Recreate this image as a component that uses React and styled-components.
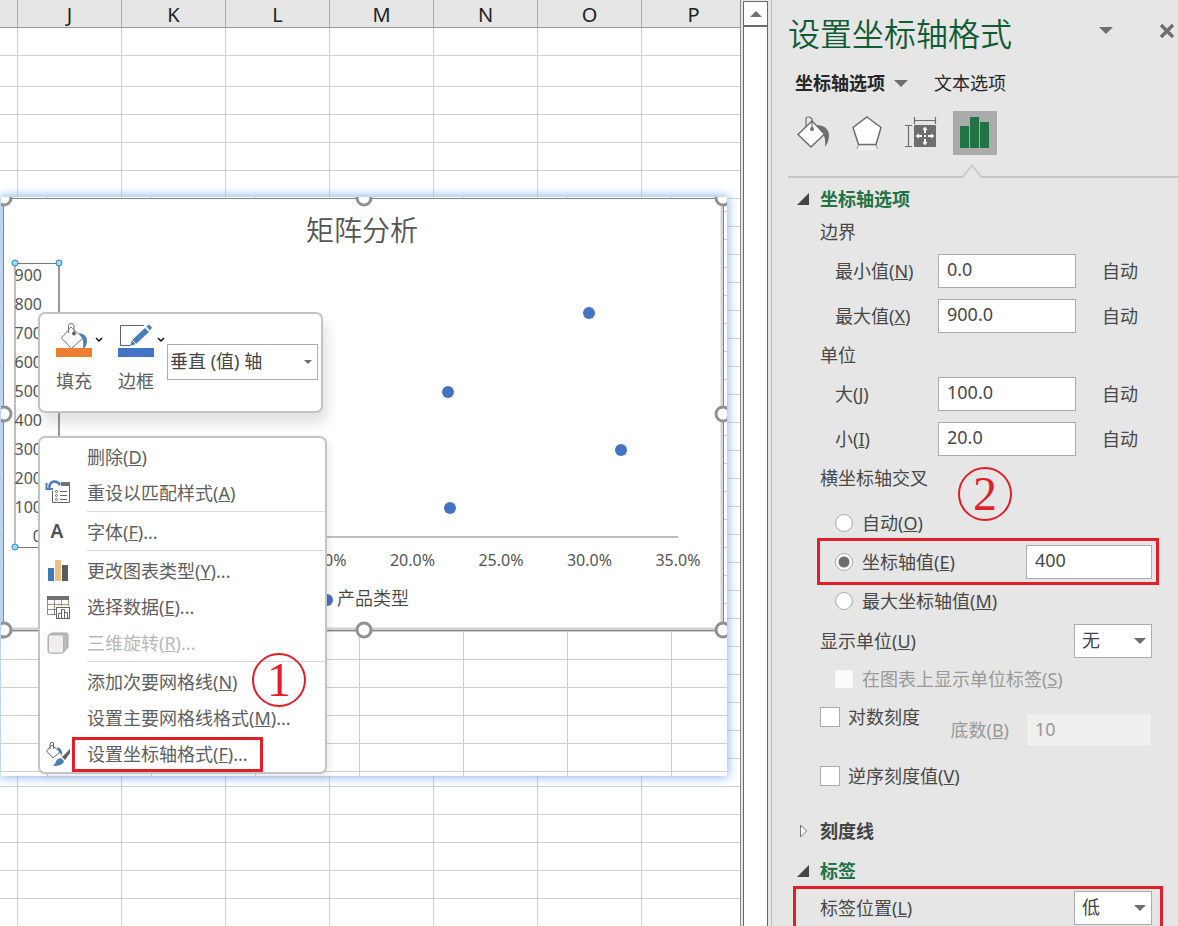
import styled, { createGlobalStyle, css } from 'styled-components';

const GlobalStyle = createGlobalStyle`
  * {
    box-sizing: border-box;
  }

  body {
    margin: 0;
    font-family: 'Noto Sans', 'Noto Sans CJK SC', sans-serif;
    font-size: 18px;
    line-height: 24px;
    color: #484848;
    background: #e6e6e6;
  }

  button, input, select {
    margin: 0;
    font: inherit;
    color: inherit;
  }

  button {
    padding: 0;
    border: 0;
    background: none;
    text-align: left;
  }
`;

const Page = styled.div`
  display: flex;
  height: 100vh;
  overflow: hidden;
`;

/* ---------- worksheet ---------- */

const Sheet = styled.main`
  position: relative;
  flex: 1;
  min-width: 0;
  overflow: hidden;
  background: #fff;
  border-right: 1px solid #8c8c8c;
`;

const Cells = styled.table`
  width: 746px;
  table-layout: fixed;
  border-collapse: separate;
  border-spacing: 0;

  th {
    height: 28px;
    padding: 3px 0 0;
    font-size: 20px;
    font-weight: 400;
    color: #222;
    background: #e6e6e6;
    border-right: 1px solid #ababab;
    border-bottom: 1px solid #999;
  }

  th:first-child {
    width: 18px;
  }

  td {
    height: 28px;
    padding: 0;
    border-right: 1px solid #d0d0d0;
    border-bottom: 1px solid #d0d0d0;
  }

  tr:nth-child(2) td {
    height: 31px;
  }
`;

const ScrollBar = styled.div`
  flex: 0 0 25px;
  margin: 1px 3px 0 2px;
  border: 1px solid #6a6a6a;
  border-bottom: 0;
  background: #fff;
`;

const ScrollButton = styled.button`
  display: flex;
  align-items: center;
  justify-content: center;
  width: 100%;
  height: 25px;
  border-bottom: 2px solid #6a6a6a;
`;

/* ---------- pasted picture with the chart ---------- */

const Picture = styled.figure`
  position: absolute;
  top: 197px;
  left: 1px;
  width: 726px;
  height: 579px;
  margin: 0;
  overflow: hidden;
  box-shadow: 0 0 10px 1px #86b4f0;
  background-color: #fff;
  background-image:
    linear-gradient(90deg, #cdcdcd 1px, transparent 1px),
    linear-gradient(#cdcdcd 1px, transparent 1px);
  background-size: 104px 28px;
  background-position: 46px 14px;

  svg {
    display: block;
  }
`;

const Mark = styled.span`
  position: absolute;
  top: ${(p) => p.$top};
  left: ${(p) => p.$left};
  display: flex;
  align-items: center;
  justify-content: center;
  width: 54px;
  height: 54px;
  border: 2px solid #e01f2b;
  border-radius: 50%;
  font-family: 'Liberation Serif', serif;
  font-size: 48px;
  line-height: 50px;
  color: #e01f2b;
`;

/* ---------- floating menus ---------- */

const floating = css`
  position: absolute;
  left: 38px;
  background: #fff;
  border: 2px solid #c3c3c3;
  border-radius: 7px;
  color: #606060;
`;

const MiniBar = styled.div`
  ${floating}
  top: 312px;
  display: flex;
  width: 285px;
  height: 101px;
  padding: 8px 3px 8px 16px;
  box-shadow: 4px 10px 14px rgba(0, 0, 0, 0.12);
`;

const MiniButton = styled.button`
  display: flex;
  flex: 0 0 62px;
  flex-direction: column;
  justify-content: space-between;
  height: 71px;

  svg {
    display: block;
  }
`;

const Drop = styled.span`
  position: relative;
  display: block;
  width: ${(p) => p.$width};

  svg {
    position: absolute;
    top: 50%;
    right: 6px;
    transform: translateY(-50%);
    pointer-events: none;
  }
`;

const Select = styled.select`
  display: block;
  width: 100%;
  height: ${(p) => (p.$tall ? 36 : 34)}px;
  padding: 0 ${(p) => (p.$tall ? 2 : 7)}px 2px;
  border: 1px solid #ababab;
  border-radius: 0;
  background: #fff;
  color: #444;
  appearance: none;
`;

const DropSlot = styled.div`
  margin: 22px 0 0 -13px;
`;

const Menu = styled.ul`
  ${floating}
  top: 436px;
  width: 289px;
  margin: 0;
  padding: 1px 0 0;
  list-style: none;
  box-shadow: 3px 4px 6px rgba(0, 0, 0, 0.08);
`;

const MenuButton = styled.button`
  display: grid;
  grid-template-columns: 40px 1fr;
  align-items: center;
  width: 100%;
  height: 36px;
  padding-left: 7px;
  white-space: nowrap;

  &:disabled {
    color: #b8b8b8;
  }
`;

const MenuIcon = styled.span`
  display: block;
  width: 26px;
  height: 26px;
  margin-left: -2px;
`;

const MenuLabel = styled.span`
  justify-self: start;
  ${(p) =>
    p.$boxed &&
    css`
      margin-left: -12px;
      padding: 2px 12px 3px;
      outline: 3px solid #e01f2b;
    `}
`;

const MenuRule = styled.li`
  height: 3px;
  margin-left: 47px;
  border-top: 1px solid #dadada;
`;

/* ---------- format pane ---------- */

const Pane = styled.aside`
  position: relative;
  flex: 0 0 407px;
  padding-left: 16px;
  overflow: hidden;
  background: #e6e6e6;
  border-left: 1px solid #bdbdbd;
`;

const PaneHead = styled.header`
  display: flex;
  align-items: center;
  height: 64px;
  padding: 4px 3px 0 0;

  h1 {
    flex: 1;
    margin: 0;
    font-size: 32px;
    line-height: 44px;
    font-weight: 350;
    color: #0f5c34;
  }
`;

const HeadButton = styled.button`
  display: flex;
  margin: 0 0 7px 46px;
`;

const Tabs = styled.nav`
  display: flex;
  align-items: center;
  gap: 26px;
  height: 38px;
  padding-left: 7px;
`;

const Tab = styled.button`
  display: flex;
  align-items: center;
  gap: 9px;
  color: #262626;
  font-weight: ${(p) => (p.$active ? 700 : 400)};
`;

const IconTabs = styled.div`
  display: flex;
  align-items: center;
  gap: 10px;
  height: 62px;
  padding-left: 3px;
`;

const IconTab = styled.button`
  display: flex;
  align-items: center;
  justify-content: center;
  width: 44px;
  height: 44px;
  background: ${(p) => (p.$active ? '#ababab' : 'none')};
`;

const Divider = styled.div`
  position: relative;
  height: 14px;
  border-bottom: 2px solid #c6c6c6;

  svg {
    position: absolute;
    top: 0;
    left: 174px;
  }
`;

const Section = styled.section`
  & + & {
    margin-top: 3px;
  }
`;

const SectionHead = styled.button`
  display: grid;
  grid-template-columns: 32px 1fr;
  align-items: center;
  width: 100%;
  height: 37px;
  padding: 5px 0 0;
  font-weight: 700;
  color: ${(p) => (p.$open ? '#217346' : '#444')};

  svg {
    margin-left: 9px;
  }
`;

const Body = styled.div`
  padding: 0 26px 8px 32px;
`;

const GroupLabel = styled.div`
  display: flex;
  align-items: center;
  height: 33px;
`;

const Field = styled.div`
  display: grid;
  grid-template-columns: 103px 138px 1fr;
  align-items: center;
  height: 45px;
  padding-left: 15px;

  button {
    justify-self: start;
    margin-left: 26px;
  }
`;

const TextBox = styled.input`
  width: ${(p) => p.$width || '100%'};
  height: 34px;
  padding: 0 8px 3px;
  border: 1px solid #ababab;
  border-radius: 0;
  background: #fff;

  &:disabled {
    color: #999;
    background: #efefed;
    border-color: #e2e2e0;
  }
`;

const RadioGroup = styled.div`
  position: relative;
  padding-top: 10px;
`;

const Row = styled.div`
  display: flex;
  align-items: center;
  justify-content: space-between;
  height: ${(p) => p.$height}px;
  padding-left: ${(p) => (p.$indent ? 15 : 0)}px;
`;

const RedBox = styled.div`
  margin: ${(p) => (p.$wide ? '2px -8px 0 -24px' : '0 -4px 0 0')};
  padding: ${(p) => (p.$wide ? '0 8px 0 24px' : '0 4px 0 0')};
  min-height: ${(p) => (p.$wide ? 90 : 41)}px;
  outline: 3px solid #e01f2b;
`;

const Choice = styled.label`
  display: flex;
  align-items: center;
  gap: 9px;
  color: ${(p) => (p.$disabled ? '#999' : 'inherit')};
`;

const Radio = styled.input`
  width: 18px;
  height: 18px;
  margin: 0;
  appearance: none;
  border: 1px solid #ababab;
  border-radius: 50%;
  background: #fff;

  &:checked {
    background: radial-gradient(circle, #6e6e6e 5px, #fff 6px);
  }
`;

const Check = styled.input`
  width: 20px;
  height: 20px;
  margin: 0 -1px 0 0;
  appearance: none;
  border: 1px solid #ababab;
  background: #fff;

  &:disabled {
    width: 18px;
    height: 18px;
    margin: 0;
    border-color: #f7f7f7;
    background: #fbfbfb;
  }
`;

const LogRow = styled.div`
  display: flex;
  align-items: flex-start;
  justify-content: space-between;
  height: 58px;

  > label {
    height: 44px;
  }
`;

const BaseField = styled.div`
  display: flex;
  align-items: center;
  gap: 17px;
  margin-top: 18px;
  color: #999;
`;

/* ---------- drawings ---------- */

const Caret = ({ size = 14, color = '#6e6e6e' }) => (
  <svg width={size} height={size / 2} viewBox="0 0 14 7">
    <path d="M0 0H14L7 7Z" fill={color} />
  </svg>
);

const Chevron = () => (
  <path d="M40 16l3 3 3-3" fill="none" stroke="#111" strokeWidth="1.500" />
);

const FillIcon = () => (
  <svg width="50" height="36" viewBox="0 0 50 36">
    <path d="M15 5L27 16L15.500 26.500L5.500 16Z" fill="#fff" stroke="#777" />
    <path d="M12.500 11V3.500Q12.500 1.500 15 1.500T18 3.500V11" fill="none" stroke="#777" />
    <circle cx="18" cy="11.500" r="2" fill="#666" />
    <path d="M23 11Q31 12 31 19Q31 24 27 27Q28 19 26 16Z" fill="#4a7ebb" />
    <rect y="26" width="36" height="9" fill="#ed7d31" />
    <Chevron />
  </svg>
);

const BorderIcon = () => (
  <svg width="50" height="36" viewBox="0 0 50 36">
    <path d="M26 3.500H2.500V23.500H12" fill="none" stroke="#666" />
    <path d="M12 24L14 18L27 6L31 10L18 22Z" fill="#4a7ebb" />
    <path d="M28.500 4.500L31 2.500L34 5.500L32 8.500Z" fill="#4a7ebb" />
    <path d="M14 18L18 22" stroke="#fff" />
    <rect y="26" width="36" height="9" fill="#4472c4" />
    <Chevron />
  </svg>
);

const ResetIcon = () => (
  <svg viewBox="0 0 26 26">
    <path d="M7.500 11V22.500H24.500V5" fill="#fff" stroke="#666" />
    <rect x="16" y="2" width="9" height="4" fill="#707070" />
    <path d="M15 11.500H22M15 15.500H22M15 19.500H22" stroke="#666" />
    <g fill="none" stroke="#666">
      <circle cx="11.500" cy="11.500" r="1" />
      <circle cx="11.500" cy="15.500" r="1" />
      <circle cx="11.500" cy="19.500" r="1" />
    </g>
    <path d="M15 5Q12 0 7 2Q4 4 4.500 8" fill="none" stroke="#4a7ebb" strokeWidth="2.500" />
    <path d="M1.500 3V9H8" fill="none" stroke="#4a7ebb" strokeWidth="2" />
  </svg>
);

const FontIcon = () => (
  <svg viewBox="0 0 26 26">
    <text x="12" y="19" textAnchor="middle" fontSize="19" fontWeight="600" fill="#505050">A</text>
  </svg>
);

const ChartTypeIcon = () => (
  <svg viewBox="0 0 26 26">
    <rect x="3" y="10" width="6" height="13" fill="#3f79b8" />
    <rect x="10" y="2" width="6" height="21" fill="#ecbf80" />
    <rect x="17" y="7" width="6" height="16" fill="#595959" />
  </svg>
);

const SelectDataIcon = () => (
  <svg viewBox="0 0 26 26">
    <rect x="2" y="2" width="22" height="4" fill="#707070" />
    <path d="M2.500 6V20.500H11M2 15.500H12M9.500 6V20" fill="none" stroke="#8a8a8a" />
    <path d="M2 10.500H24M16.500 6V12M23.500 6V12" fill="none" stroke="#b09078" />
    <rect x="11.500" y="13.500" width="13" height="11" fill="#fff" stroke="#666" />
    <path d="M13.500 24V19.500H16.500V24M16.500 20V15.500H19.500V24M19.500 18.500H22.500V24" fill="none" stroke="#666" />
  </svg>
);

const CubeIcon = () => (
  <svg viewBox="0 0 26 26">
    <path d="M3 7Q3 5 5 4L7 3H21Q23 3 23 5V17L19 22Q18 23 16 23H5Q3 23 3 21Z" fill="#bdbabd" stroke="#a8a4a8" />
    <rect x="3.500" y="5" width="15" height="18" rx="2" fill="#f1eef2" stroke="#b5b1b5" />
  </svg>
);

const FormatIcon = () => (
  <svg viewBox="0 0 26 26">
    <path d="M7 4L15 11L8 17L1.500 10Z" fill="#fff" stroke="#666" />
    <path d="M5 8V3Q5 1.500 7 1.500T8.500 3V8" fill="none" stroke="#666" />
    <path d="M12 6Q18 7 17 15Q15 12 14 11Z" fill="#4a7ebb" />
    <path d="M25 8V12L20 19L17 16Z" fill="#606060" />
    <path d="M16 17L19 20Q18 25 8 25Q11 22 11 20Q13 17 16 17Z" fill="#4a7ebb" />
  </svg>
);

const BucketIcon = () => (
  <svg width="34" height="34" viewBox="0 0 34 34">
    <path d="M20 9Q32 9 33 19Q33 26 29 31Q30 22 27 18Z" fill="#6e6e6e" />
    <path d="M16 5L28.500 18L15 31L2 18.500Z" fill="#fff" stroke="#6e6e6e" strokeWidth="1.500" />
    <path d="M10 11V3Q10 1 12.500 1T16 3V13" fill="none" stroke="#6e6e6e" strokeWidth="1.200" />
    <circle cx="16" cy="13" r="2" fill="#6e6e6e" />
  </svg>
);

const PentagonIcon = () => (
  <svg width="34" height="36" viewBox="0 0 34 36">
    <path d="M17 2L31 12.500L26 29.500H8.500L3 12.500Z" fill="#fff" stroke="#6e6e6e" strokeWidth="1.500" />
    <path d="M9 31H25.500L27 35H7Z" fill="#f1f1f1" />
    <path d="M8.500 30L7 34M26 30L27.500 34" stroke="#999" />
  </svg>
);

const SizeIcon = () => (
  <svg width="34" height="34" viewBox="0 0 34 34">
    <path d="M10.500 1V8M31.500 1V8M10.500 4.500H31.500M1 9.500H8M1 30.500H8M4.500 9.500V30.500" stroke="#6e6e6e" strokeWidth="1.200" />
    <rect x="10" y="9" width="22" height="22" rx="1" fill="#6e6e6e" />
    <path d="M21 13V17M21 23V27M14 20H18M24 20H28" stroke="#fff" strokeWidth="2" />
    <path d="M21 10.500L18.500 14H23.500ZM21 29.500L18.500 26H23.500ZM11.500 20L15 17.500V22.500ZM30.500 20L27 17.500V22.500Z" fill="#fff" />
    <rect x="20" y="19" width="2" height="2" fill="#fff" />
  </svg>
);

const BarsIcon = () => (
  <svg width="30" height="32" viewBox="0 0 30 32">
    <path d="M0 9H9V31H0ZM10 0H19V31H10ZM20 5H29V31H20Z" fill="#217346" />
  </svg>
);

const points = [
  [588, 116],
  [447, 195],
  [620, 253],
  [449, 311],
];

const handles = [
  [3, 1], [363, 1], [722, 1],
  [3, 217], [722, 217],
  [3, 433], [363, 433], [722, 433],
];

const Chart = () => (
  <svg width="726" height="442" viewBox="0 0 726 442">
    <rect width="3" height="442" fill="#c3d3ea" />
    <rect x="3" y="1" width="719" height="433" fill="#fff" />
    <path d="M721 1V434M3 432H722" stroke="#d3d3d3" strokeWidth="3" />
    <path d="M2.500 433V1.500H722.500V433.500H3" fill="none" stroke="#868686" />
    <text x="361" y="44" textAnchor="middle" fontSize="28" fontWeight="350" fill="#555">矩阵分析</text>
    <path d="M14 67V350" stroke="#c4bcbc" strokeWidth="2" />
    <path d="M58 67V350" stroke="#999" strokeWidth="2" />
    <path d="M14 66.500H58M14 350.500H58" stroke="#777" />
    <path d="M58 340H677" stroke="#bfbfbf" strokeWidth="2" />
    <g fontSize="16" fill="#555">
      {[900, 800, 700, 600, 500, 400, 300, 200, 100, 0].map((n, i) => (
        <text key={n} x="41" y={84 + i * 29} textAnchor="end">{n}</text>
      ))}
      {[15, 20, 25, 30, 35].map((n, i) => (
        <text key={n} x={323 + i * 88.5} y="369" textAnchor="middle">{n}.0%</text>
      ))}
    </g>
    <g fill="#4472c4">
      {points.map(([x, y]) => (
        <circle key={y} cx={x} cy={y} r="6" />
      ))}
      <circle cx="326" cy="403" r="6" />
    </g>
    <text x="336" y="408" fontSize="18" fontWeight="350" fill="#444">产品类型</text>
    <g fill="#9bdcfb" stroke="#2e83c9">
      <circle cx="14" cy="66" r="3" />
      <circle cx="58" cy="66" r="3" />
      <circle cx="14" cy="350" r="3" />
    </g>
    <g fill="#fff" stroke="#919191" strokeWidth="3">
      {handles.map(([x, y]) => (
        <circle key={`${x}-${y}`} cx={x} cy={y} r="7" />
      ))}
    </g>
  </svg>
);

/* ---------- page ---------- */

const columns = ['J', 'K', 'L', 'M', 'N', 'O', 'P'];
const rows = Array.from({ length: 60 }, (_, i) => i);

const menu = [
  { text: '删除', k: 'D' },
  { text: '重设以匹配样式', k: 'A', icon: <ResetIcon />, rule: true },
  { text: '字体', k: 'F', more: true, icon: <FontIcon />, rule: true },
  { text: '更改图表类型', k: 'Y', more: true, icon: <ChartTypeIcon /> },
  { text: '选择数据', k: 'E', more: true, icon: <SelectDataIcon /> },
  { text: '三维旋转', k: 'R', more: true, icon: <CubeIcon />, disabled: true, rule: true },
  { text: '添加次要网格线', k: 'N' },
  { text: '设置主要网格线格式', k: 'M', more: true },
  { text: '设置坐标轴格式', k: 'F', more: true, icon: <FormatIcon />, boxed: true },
];

const Key = ({ text, k }) => (
  <>
    {text}(<u>{k}</u>)
  </>
);

const NumberField = ({ id, text, k, value }) => (
  <Field>
    <label htmlFor={id}><Key text={text} k={k} /></label>
    <TextBox id={id} defaultValue={value} />
    <button type="button">自动</button>
  </Field>
);

const Twisty = ({ open }) =>
  open ? (
    <svg width="13" height="12" viewBox="0 0 13 12">
      <path d="M12 0V12H0Z" fill="#444" />
    </svg>
  ) : (
    <svg width="13" height="14" viewBox="0 0 13 14">
      <path d="M3.500 1L9.500 7L3.500 13Z" fill="#fff" stroke="#777" />
    </svg>
  );

const ContextMenu = () => (
  <Menu>
    {menu.map((m) => [
      <li key={m.text}>
        <MenuButton type="button" disabled={m.disabled}>
          <MenuIcon>{m.icon}</MenuIcon>
          <MenuLabel $boxed={m.boxed}>
            <Key text={m.text} k={m.k} />
            {m.more && '...'}
          </MenuLabel>
        </MenuButton>
      </li>,
      m.rule && <MenuRule key={`${m.text}-rule`} />,
    ])}
  </Menu>
);

const FormatPane = () => (
  <Pane>
    <PaneHead>
      <h1>设置坐标轴格式</h1>
      <HeadButton type="button" aria-label="任务窗格选项"><Caret /></HeadButton>
      <HeadButton type="button" aria-label="关闭">
        <svg width="16" height="16" viewBox="0 0 16 16">
          <path d="M2 2L14 14M14 2L2 14" stroke="#6e6e6e" strokeWidth="3.500" />
        </svg>
      </HeadButton>
    </PaneHead>
    <Tabs>
      <Tab type="button" $active>坐标轴选项<Caret /></Tab>
      <Tab type="button">文本选项</Tab>
    </Tabs>
    <IconTabs>
      <IconTab type="button" aria-label="填充与线条"><BucketIcon /></IconTab>
      <IconTab type="button" aria-label="效果"><PentagonIcon /></IconTab>
      <IconTab type="button" aria-label="大小与属性"><SizeIcon /></IconTab>
      <IconTab type="button" aria-label="坐标轴选项" $active><BarsIcon /></IconTab>
    </IconTabs>
    <Divider>
      <svg width="20" height="15" viewBox="0 0 20 15">
        <path d="M0 14L10 2L20 14V15H0Z" fill="#e6e6e6" />
        <path d="M0 13.500L10 1.500L20 13.500" fill="none" stroke="#c6c6c6" strokeWidth="1.500" />
      </svg>
    </Divider>

    <Section>
      <SectionHead type="button" $open><Twisty open />坐标轴选项</SectionHead>
      <Body>
        <GroupLabel>边界</GroupLabel>
        <NumberField id="min" text="最小值" k="N" value="0.0" />
        <NumberField id="max" text="最大值" k="X" value="900.0" />
        <GroupLabel>单位</GroupLabel>
        <NumberField id="major" text="大" k="J" value="100.0" />
        <NumberField id="minor" text="小" k="I" value="20.0" />
        <GroupLabel>横坐标轴交叉</GroupLabel>
        <RadioGroup>
          <Mark $top="-27px" $left="138px">2</Mark>
          <Row $height={37} $indent>
            <Choice><Radio type="radio" name="cross" /><span><Key text="自动" k="O" /></span></Choice>
          </Row>
          <RedBox>
            <Row $height={41} $indent>
              <Choice><Radio type="radio" name="cross" defaultChecked /><span><Key text="坐标轴值" k="E" /></span></Choice>
              <TextBox $width="126px" defaultValue="400" aria-label="坐标轴值" />
            </Row>
          </RedBox>
          <Row $height={37} $indent>
            <Choice><Radio type="radio" name="cross" /><span><Key text="最大坐标轴值" k="M" /></span></Choice>
          </Row>
        </RadioGroup>
        <Row $height={44}>
          <label htmlFor="unit"><Key text="显示单位" k="U" /></label>
          <Drop $width="78px">
            <Select id="unit"><option>无</option></Select>
            <Caret size={12} />
          </Drop>
        </Row>
        <Row $height={32} $indent>
          <Choice $disabled><Check type="checkbox" disabled /><span><Key text="在图表上显示单位标签" k="S" /></span></Choice>
        </Row>
        <LogRow>
          <Choice><Check type="checkbox" /><span>对数刻度</span></Choice>
          <BaseField>
            <label htmlFor="base"><Key text="底数" k="B" /></label>
            <TextBox id="base" $width="126px" defaultValue="10" disabled />
          </BaseField>
        </LogRow>
        <Row $height={46}>
          <Choice><Check type="checkbox" /><span><Key text="逆序刻度值" k="V" /></span></Choice>
        </Row>
      </Body>
    </Section>

    <Section>
      <SectionHead type="button"><Twisty />刻度线</SectionHead>
    </Section>

    <Section>
      <SectionHead type="button" $open><Twisty open />标签</SectionHead>
      <Body>
        <RedBox $wide>
          <Row $height={38}>
            <label htmlFor="labelpos"><Key text="标签位置" k="L" /></label>
            <Drop $width="78px">
              <Select id="labelpos"><option>低</option></Select>
              <Caret size={12} />
            </Drop>
          </Row>
        </RedBox>
      </Body>
    </Section>
  </Pane>
);

const App = () => {
  return (
    <Page>
      <GlobalStyle />
      <Sheet>
        <Cells>
          <thead>
            <tr>
              <th />
              {columns.map((c) => <th key={c}>{c}</th>)}
            </tr>
          </thead>
          <tbody>
            {rows.map((r) => (
              <tr key={r}>
                <td />
                {columns.map((c) => <td key={c} />)}
              </tr>
            ))}
          </tbody>
        </Cells>
        <Picture><Chart /></Picture>
        <MiniBar>
          <MiniButton type="button"><FillIcon />填充</MiniButton>
          <MiniButton type="button"><BorderIcon />边框</MiniButton>
          <DropSlot>
            <Drop $width="151px">
              <Select $tall aria-label="图表元素"><option>垂直 (值) 轴</option></Select>
              <Caret size={8} />
            </Drop>
          </DropSlot>
        </MiniBar>
        <ContextMenu />
        <Mark $top="653px" $left="252px">1</Mark>
      </Sheet>
      <ScrollBar>
        <ScrollButton type="button" aria-label="向上滚动">
          <svg width="12" height="6" viewBox="0 0 12 6"><path d="M0 6L6 0L12 6Z" fill="#6e6e6e" /></svg>
        </ScrollButton>
      </ScrollBar>
      <FormatPane />
    </Page>
  );
};

export default App;
